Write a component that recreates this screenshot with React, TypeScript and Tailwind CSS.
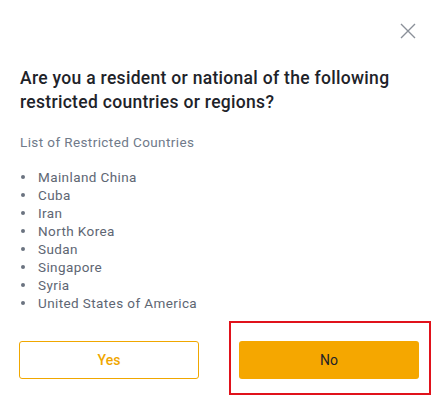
export default function App() {
    const countries = [
        "Mainland China",
        "Cuba",
        "Iran",
        "North Korea",
        "Sudan",
        "Singapore",
        "Syria",
        "United States of America",
    ];

    return (
        <div className="w-[435px] h-[413px] bg-white font-['Roboto',sans-serif] text-[#1e2329] overflow-hidden">

            {/* Close */}
            <div className="flex justify-end pt-[23px] pr-[19px]">
                <svg width="16" height="16" viewBox="0 0 16 16" className="text-[#8a9099]">
                    <path d="M1 1 L15 15 M15 1 L1 15" stroke="currentColor" strokeWidth="1.4" fill="none" />
                </svg>
            </div>

            {/* Title */}
            <h1 className="mt-[27px] px-5 text-[17.5px] leading-[24px] font-medium tracking-[0.3px]">
                Are you a resident or national of the following restricted countries or regions?
            </h1>

            {/* Restricted list */}
            <p className="mt-[19px] px-5 text-[13.5px] leading-[18px] tracking-[0.4px] text-[#707a8a]">
                List of Restricted Countries
            </p>
            <ul className="mt-[17px] px-5 text-[13.5px] leading-[18px] tracking-[0.4px] text-[#5e6673]">
                {countries.map((c) => (
                    <li key={c} className="flex items-center">
                        <span className="w-[18px] flex items-center pl-[1px]">
                            <span className="h-[4px] w-[4px] rounded-full bg-[#6b7380]" />
                        </span>
                        {c}
                    </li>
                ))}
            </ul>

            {/* Actions */}
            <div className="mt-[9px] flex items-start pl-[19px]">
                <button className="mt-[20px] h-[38px] w-[180px] rounded-[3px] border border-[#f0a700] text-[#f0a700] text-[14px] font-medium">
                    Yes
                </button>
                <div className="ml-[30px] w-[202px] h-[74px] pt-[18px] pl-[8px] border-2 border-[#e0121b]">
                    <button className="block h-[38px] w-[180px] rounded-[3px] bg-[#f5a700] text-[#1e2329] text-[14px]">
                        No
                    </button>
                </div>
            </div>
        </div>
    );
}
